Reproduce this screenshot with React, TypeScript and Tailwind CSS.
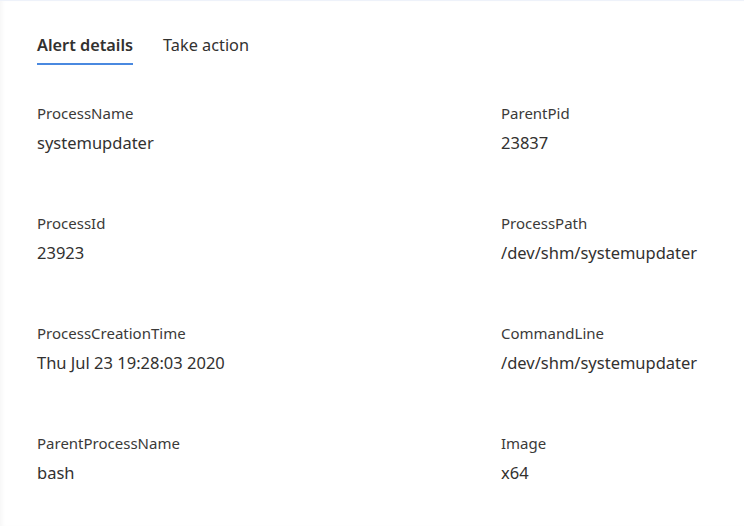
import React, { useState } from "react";

const fields = [
  ["ProcessName", "systemupdater"],
  ["ParentPid", "23837"],
  ["ProcessId", "23923"],
  ["ProcessPath", "/dev/shm/systemupdater"],
  ["ProcessCreationTime", "Thu Jul 23 19:28:03 2020"],
  ["CommandLine", "/dev/shm/systemupdater"],
  ["ParentProcessName", "bash"],
  ["Image", "x64"],
];

export default function App() {
  const [tab, setTab] = useState("details");

  return (
    <div
      className="h-[526px] w-[744px] overflow-hidden border-t border-[#eef2fa] bg-white text-[#323130] shadow-[inset_4px_0_4px_-2px_rgba(0,0,0,0.04)]"
      style={{ fontFamily: '"Segoe UI", "Noto Sans", "Open Sans", sans-serif' }}
    >
      <div className="pl-[37px] pt-[34px]">
        <div className="flex gap-[30px]">
          <button
            onClick={() => setTab("details")}
            className={
              tab === "details"
                ? "border-b-2 border-[#4a89e0] pb-[8px] text-[16.3px] leading-[20px] font-semibold"
                : "border-b-2 border-transparent pb-[8px] text-[16.3px] leading-[20px]"
            }
          >
            Alert details
          </button>
          <button
            onClick={() => setTab("action")}
            className={
              tab === "action"
                ? "border-b-2 border-[#4a89e0] pb-[8px] text-[16.3px] leading-[20px] font-semibold"
                : "border-b-2 border-transparent pb-[8px] text-[16.3px] leading-[20px]"
            }
          >
            Take action
          </button>
        </div>

        <div className="mt-[38px] grid grid-cols-[464px_1fr] gap-y-[59px]">
          {fields.map(([label, value]) => (
            <div key={label} className="flex flex-col">
              <span className="text-[15px] leading-[20px] text-[#3b3a39]">{label}</span>
              <span className="mt-[9px] text-[16.5px] leading-[22px]">{value}</span>
            </div>
          ))}
        </div>
      </div>
    </div>
  );
}
